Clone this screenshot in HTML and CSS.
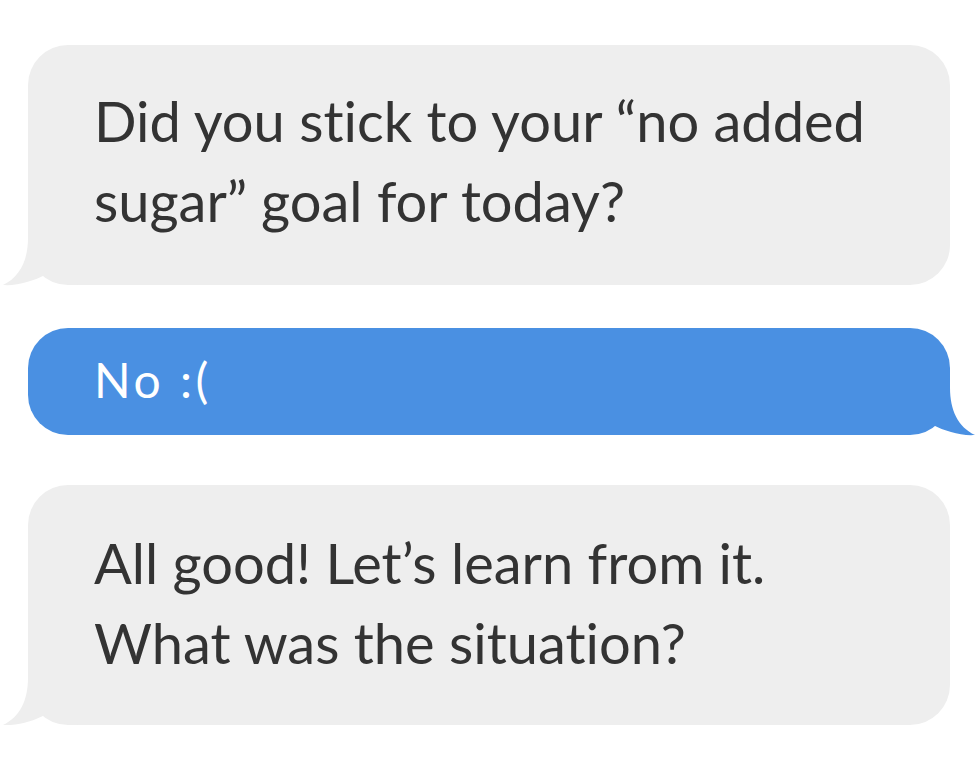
FILE: index.html
```html
<!DOCTYPE html>
<html lang="en">
<head>
<meta charset="utf-8">
<title>Chat</title>
<link rel="stylesheet" href="styles.css">
</head>
<body>
<div class="chat">
  <div class="bubble bubble--in bubble--q1">
    <p class="bubble__text">Did you stick to your “no added<br>sugar” goal for today?</p>
    <svg class="tail tail--left" width="80" height="56" viewBox="0 0 80 56" aria-hidden="true"><path d="M28 0 L28 8 C28 30 20 47 3 55 C18 56 33 51 45 45 C55 52 65 55 80 55 L80 0 Z"/></svg>
  </div>
  <div class="bubble bubble--out">
    <p class="bubble__text">No :(</p>
    <svg class="tail tail--right" width="80" height="56" viewBox="0 0 80 56" aria-hidden="true"><path d="M52 0 L52 8 C52 30 60 47 77 55 C62 56 47 51 35 45 C25 52 15 55 0 55 L0 0 Z"/></svg>
  </div>
  <div class="bubble bubble--in bubble--q2">
    <p class="bubble__text">All good! Let’s learn from it.<br>What was the situation?</p>
    <svg class="tail tail--left" width="80" height="56" viewBox="0 0 80 56" aria-hidden="true"><path d="M28 0 L28 8 C28 30 20 47 3 55 C18 56 33 51 45 45 C55 52 65 55 80 55 L80 0 Z"/></svg>
  </div>
</div>
</body>
</html>
```
FILE: styles.css
```css
* { box-sizing: border-box; }
html, body { margin: 0; padding: 0; background: #ffffff; }
body {
  font-family: "Lato", "Open Sans", sans-serif;
  color: #333333;
  font-variant-ligatures: none;
}
.chat {
  display: flex;
  flex-direction: column;
  padding: 45px 28px 0 28px;
}
.bubble {
  position: relative;
  border-radius: 40px;
}
.bubble__text {
  margin: 0;
  font-size: 56px;
  line-height: 80px;
  font-weight: 400;
  position: relative;
  z-index: 1;
}
.bubble--in { background: #eeeeee; }
.bubble--in .bubble__text { padding: 36px 20px 44px 66px; }
.bubble--q2 { margin-top: 50px; }
.bubble--q2 .bubble__text { padding: 38px 20px 42px 66px; }
.bubble--out {
  margin-top: 43px;
  background: #4a90e2;
  color: #ffffff;
}
.bubble--out .bubble__text {
  font-size: 48px;
  letter-spacing: 3.5px;
  padding: 12px 20px 15px 66px;
}
.tail {
  position: absolute;
  bottom: -1px;
  display: block;
}
.tail--left { left: -28px; fill: #eeeeee; }
.tail--right { right: -28px; fill: #4a90e2; }
```
